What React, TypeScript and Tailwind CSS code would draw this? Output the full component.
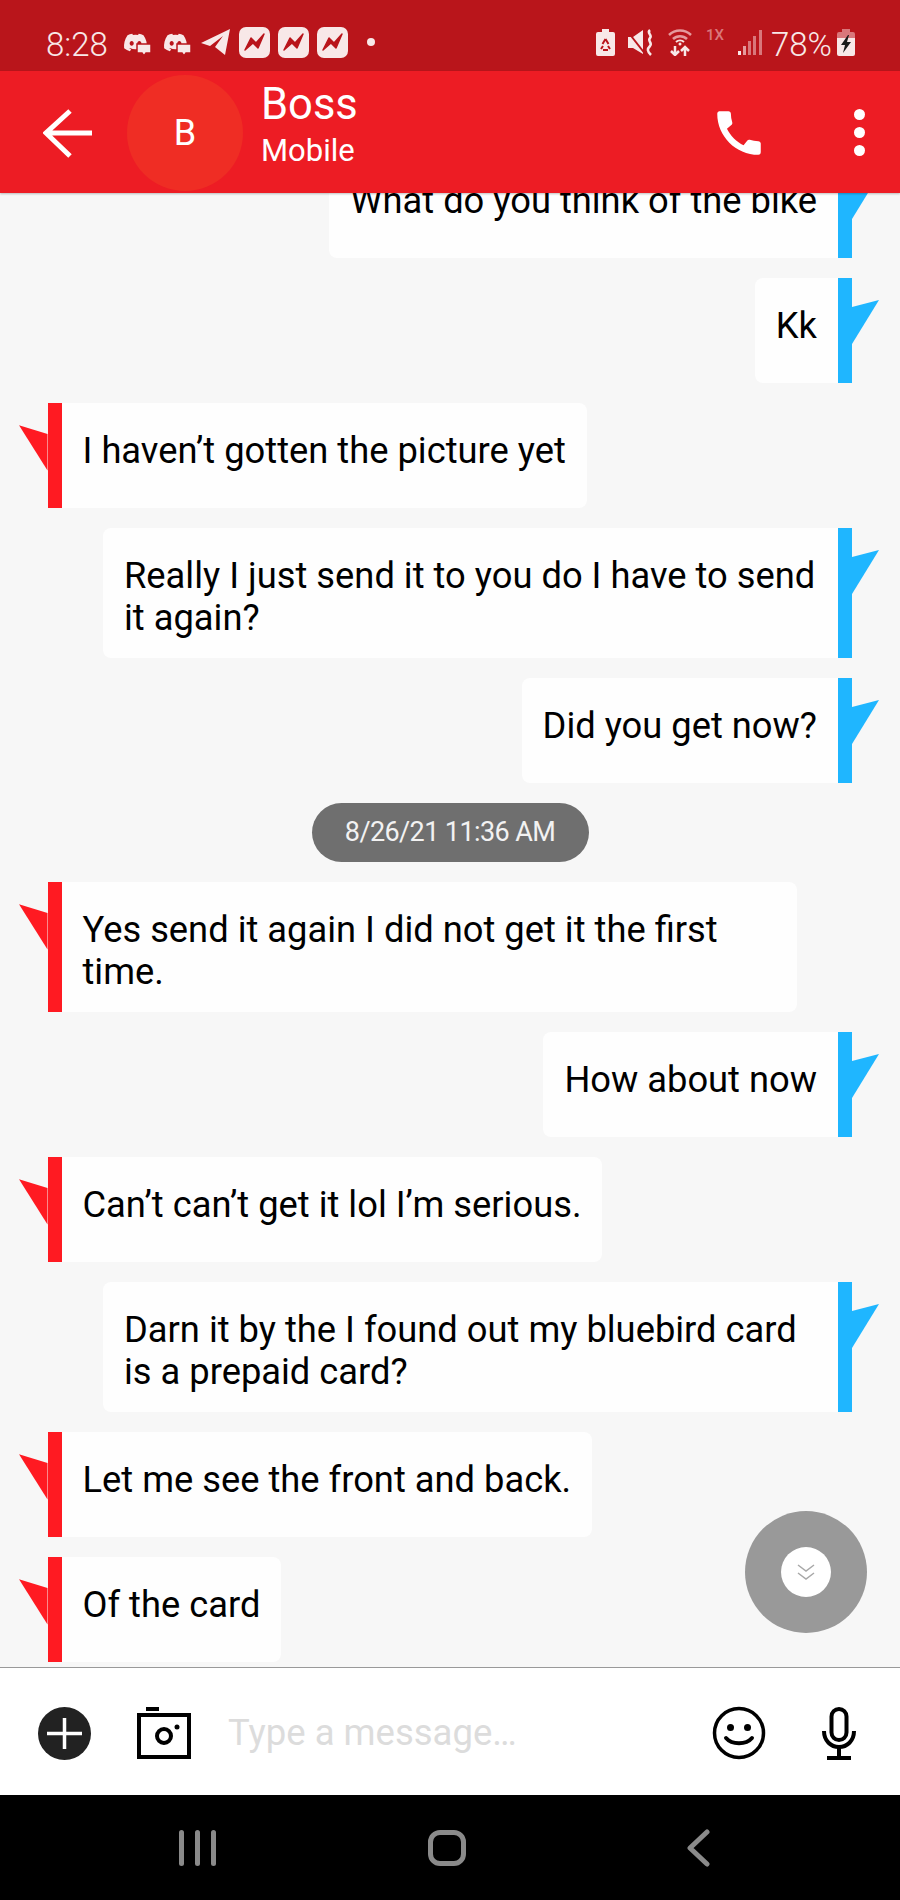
import React from 'react';
import { FaDiscord } from 'react-icons/fa';
import { MdCall } from 'react-icons/md';

type Message = { id: number; side: 'in' | 'out'; text: string };

const firstMessages: Message[] = [
  { id: 1, side: 'out', text: 'What do you think of the bike' },
  { id: 2, side: 'out', text: 'Kk' },
  { id: 3, side: 'in', text: 'I haven’t gotten the picture yet' },
  { id: 4, side: 'out', text: 'Really I just send it to you do I have to send it again?' },
  { id: 5, side: 'out', text: 'Did you get now?' },
];

const laterMessages: Message[] = [
  { id: 6, side: 'in', text: 'Yes send it again I did not get it the first time.' },
  { id: 7, side: 'out', text: 'How about now' },
  { id: 8, side: 'in', text: 'Can’t can’t get it lol I’m serious.' },
  { id: 9, side: 'out', text: 'Darn it by the I found out my bluebird card is a prepaid card?' },
  { id: 10, side: 'in', text: 'Let me see the front and back.' },
  { id: 11, side: 'in', text: 'Of the card' },
];

const MessengerBadge = () => (
  <div className="w-[31px] h-[31px] rounded-[7px] bg-[#f8e8e8] flex items-center justify-center">
    <svg width="23" height="19" viewBox="0 0 23 19">
      <path d="M2 17L8 5L13 10L21 1L15 15L10 10Z" fill="#b9151b" stroke="#b9151b" strokeWidth="1.5" strokeLinejoin="round" />
    </svg>
  </div>
);

const DiscordBadge = () => (
  <div className="relative w-[27px] h-[22px]">
    <FaDiscord className="w-[25px] h-[23px] text-[#f8e8e8]" />
    <svg className="absolute right-[-2px] bottom-[-4px]" width="16" height="14" viewBox="0 0 16 14">
      <path d="M1 1h14v9H10l-2 3-2-3H1z" fill="#f8e8e8" stroke="#b9151b" strokeWidth="1.5" />
    </svg>
  </div>
);

const StatusBar = () => (
  <div className="h-[71px] shrink-0 bg-[#b9151b] flex items-center pl-[46px] pr-[45px] pt-[13px] text-[#f8e8e8]">
    <span className="text-[33px] leading-none font-light w-[77px] relative top-[2px]">8:28</span>
    <DiscordBadge />
    <div className="ml-[13px]">
      <DiscordBadge />
    </div>
    <svg className="ml-[11px]" width="30" height="28" viewBox="0 0 30 28">
      <path d="M0 15L29 1L24 27L14 19L22 8L9 18Z" fill="#f8e8e8" />
    </svg>
    <div className="ml-[8px] flex gap-[8px]">
      <MessengerBadge />
      <MessengerBadge />
      <MessengerBadge />
    </div>
    <div className="ml-[19px] w-[8px] h-[8px] rounded-full bg-[#f8e8e8]" />
    <div className="ml-auto flex items-center">
      <svg width="19" height="27" viewBox="0 0 19 27">
        <path d="M6 0h7v3h4a2 2 0 0 1 2 2v20a2 2 0 0 1-2 2H2a2 2 0 0 1-2-2V5a2 2 0 0 1 2-2h4z" fill="#f8e8e8" />
        <path d="M9.5 10l-3 5M9.5 10l3 5M5 20l2-3M14 20l-2-3M7 21h5" stroke="#b9151b" strokeWidth="2" fill="none" />
      </svg>
      <svg className="ml-[13px]" width="27" height="27" viewBox="0 0 27 27">
        <path d="M0 8h5l10-7v24L5 19H0z" fill="#f8e8e8" />
        <path d="M0 3l18 23" stroke="#b9151b" strokeWidth="2" />
        <path d="M22 1c-4 3 3 5 0 8s3 5 0 8-3 5 1 9" stroke="#f8e8e8" strokeWidth="2.5" fill="none" />
      </svg>
      <svg className="ml-[13px]" width="24" height="28" viewBox="0 0 24 28">
        <path d="M1 7a16 16 0 0 1 22 0M5 11a10 10 0 0 1 14 0" stroke="#e59a9d" strokeWidth="2.5" fill="none" />
        <path d="M8 14a6 6 0 0 1 8 0" stroke="#f8e8e8" strokeWidth="2" fill="none" />
        <circle cx="12" cy="16" r="1.5" fill="#f8e8e8" />
        <path d="M7 18v9M3 23l4 4 4-4M17 28v-9M13 23l4-4 4 4" stroke="#f8e8e8" strokeWidth="2.5" fill="none" />
      </svg>
      <span className="ml-[14px] mb-[14px] text-[15px] leading-none text-[#d9777b] font-medium w-[18px]">1X</span>
      <svg className="ml-[14px]" width="24" height="25" viewBox="0 0 24 25">
        <rect x="0" y="21" width="3" height="4" fill="#f8e8e8" />
        <rect x="5" y="16" width="3" height="9" fill="#e59a9d" />
        <rect x="10" y="11" width="3" height="14" fill="#d9777b" />
        <rect x="15" y="6" width="3" height="19" fill="#d9777b" />
        <rect x="21" y="0" width="3" height="25" fill="#d9777b" />
      </svg>
      <span className="ml-[9px] text-[33px] leading-none font-light relative top-[2px]">78%</span>
      <svg className="ml-[5px]" width="18" height="27" viewBox="0 0 18 27">
        <path d="M5 0h8v3h3a2 2 0 0 1 2 2v4H0V5a2 2 0 0 1 2-2h3z" fill="#d9777b" />
        <path d="M0 9h18v16a2 2 0 0 1-2 2H2a2 2 0 0 1-2-2z" fill="#f8e8e8" />
        <path d="M11 6L4 16h4l-2 8 8-11h-4l2-7z" fill="#1a1a1a" />
      </svg>
    </div>
  </div>
);

const Header = () => (
  <div className="h-[122px] shrink-0 bg-[#ed1c24] flex items-center pl-[43px] pr-[35px] text-white shadow-[0_1px_2px_rgba(0,0,0,0.25)] z-10">
    <svg width="50" height="50" viewBox="0 0 50 50" className="shrink-0 mt-[3px]">
      <path d="M49 24H4M27 2L3 24l24 23" stroke="#fff" strokeWidth="5" fill="none" />
    </svg>
    <div className="ml-[34px] w-[116px] h-[116px] rounded-full bg-[#ef2d24] flex items-center justify-center text-[36px] leading-none shrink-0 mt-[2px]">
      B
    </div>
    <div className="ml-[18px] flex flex-col mt-[-13px]">
      <span className="text-[43.5px] leading-[50px]">Boss</span>
      <span className="text-[31px] leading-[42px]">Mobile</span>
    </div>
    <MdCall className="ml-auto w-[58px] h-[58px] mt-[2px]" />
    <div className="ml-[86px] flex flex-col gap-[7px]">
      <div className="w-[11px] h-[11px] rounded-full bg-white" />
      <div className="w-[11px] h-[11px] rounded-full bg-white" />
      <div className="w-[11px] h-[11px] rounded-full bg-white" />
    </div>
  </div>
);

const MessageRow = ({ message, first }: { message: Message; first?: boolean }) => {
  if (message.side === 'in') {
    return (
      <div className={`flex justify-start pl-[19px] shrink-0 ${first ? 'mt-[-40px]' : ''}`}>
        <svg width="28.5" height="70" viewBox="0 0 29 70" className="shrink-0 self-start">
          <path d="M0 22L29 31V68Z" fill="#ff1a22" />
        </svg>
        <div className="w-[14px] bg-[#ff1a22] shrink-0" />
        <div className="max-w-[735px] min-h-[105px] bg-[#fefefe] rounded-r-[8px] px-[21px] pt-[26.5px] pb-[19.5px] text-[36.3px] leading-[42px] text-black">
          {message.text}
        </div>
      </div>
    );
  }
  return (
    <div className={`flex justify-end pr-[21px] shrink-0 ${first ? 'mt-[-40px]' : ''}`}>
      <div className="max-w-[735px] min-h-[105px] bg-[#fefefe] rounded-l-[8px] px-[21px] pt-[26.5px] pb-[19.5px] text-[36.3px] leading-[42px] text-black">
        {message.text}
      </div>
      <div className="w-[14px] bg-[#1fb6ff] shrink-0" />
      <svg width="27" height="70" viewBox="0 0 27 70" className="shrink-0 self-start">
        <path d="M27 22L0 29V66Z" fill="#1fb6ff" />
      </svg>
    </div>
  );
};

const Composer = () => (
  <div className="h-[128px] shrink-0 bg-white border-t border-[#999999] flex items-center pl-[38px] pr-[44px] pt-[3px]">
    <svg width="53" height="53" viewBox="0 0 53 53" className="shrink-0">
      <circle cx="26.5" cy="26.5" r="26.5" fill="#222222" />
      <path d="M26.5 11v31M9 26.5h35" stroke="#fff" strokeWidth="3.5" />
    </svg>
    <svg width="54" height="52" viewBox="0 0 54 52" className="shrink-0 ml-[46px]">
      <path d="M9 0h13v4H9z" fill="#000" />
      <rect x="2" y="8" width="50" height="42" fill="none" stroke="#000" strokeWidth="4" />
      <circle cx="27" cy="29" r="7" fill="none" stroke="#000" strokeWidth="4" />
      <circle cx="40" cy="20" r="2.5" fill="#000" />
    </svg>
    <span className="ml-[37px] text-[36.5px] leading-none text-[#dcdcdc]">Type a message…</span>
    <svg width="54" height="54" viewBox="0 0 54 54" className="shrink-0 ml-auto">
      <circle cx="27" cy="27" r="24.5" fill="none" stroke="#000" strokeWidth="3.5" />
      <circle cx="18.5" cy="21.5" r="3.5" fill="#000" />
      <circle cx="35.5" cy="21.5" r="3.5" fill="#000" />
      <path d="M14 32c6 7 20 7 26 0" fill="none" stroke="#000" strokeWidth="4" strokeLinecap="round" />
    </svg>
    <svg width="34" height="53" viewBox="0 0 34 53" className="shrink-0 ml-[56px]">
      <rect x="9.5" y="2" width="15" height="31" rx="7.5" fill="none" stroke="#000" strokeWidth="4" />
      <path d="M2 24c0 10 7 16 15 16s15-6 15-16" fill="none" stroke="#000" strokeWidth="4" />
      <path d="M17 40v9" stroke="#000" strokeWidth="4" />
      <path d="M5 49h24v4H5z" fill="#000" />
    </svg>
  </div>
);

const NavBar = () => (
  <div className="h-[105px] shrink-0 bg-black flex items-center pl-[179px]">
    <div className="flex gap-[11px] shrink-0">
      <div className="w-[5px] h-[36px] rounded-full bg-[#8a8a8a]" />
      <div className="w-[5px] h-[36px] rounded-full bg-[#8a8a8a]" />
      <div className="w-[5px] h-[36px] rounded-full bg-[#8a8a8a]" />
    </div>
    <div className="ml-[212px] w-[38px] h-[36px] rounded-[12px] border-[5px] border-[#8a8a8a] shrink-0" />
    <svg width="24" height="38" viewBox="0 0 24 38" className="ml-[220px] shrink-0">
      <path d="M21 3L4 19l17 16" fill="none" stroke="#8a8a8a" strokeWidth="5" strokeLinecap="round" strokeLinejoin="round" />
    </svg>
  </div>
);

export default function App() {
  return (
    <div className="w-[900px] h-[1900px] flex flex-col overflow-hidden bg-[#f7f7f7] font-['Roboto',sans-serif]">
      <StatusBar />
      <Header />
      <div className="relative flex-1 min-h-0 overflow-hidden">
        <div className="flex flex-col gap-[20px]">
          {firstMessages.map((message, index) => (
            <MessageRow key={message.id} message={message} first={index === 0} />
          ))}
          <div className="flex justify-center shrink-0">
            <div className="w-[277px] h-[59px] rounded-full bg-[#6f6f6f] text-[#f2f2f2] text-[27px] leading-none tracking-[-0.6px] flex items-center justify-center">
              8/26/21 11:36 AM
            </div>
          </div>
          {laterMessages.map((message) => (
            <MessageRow key={message.id} message={message} />
          ))}
        </div>
        <div className="absolute left-[745px] top-[1318px] w-[122px] h-[122px] rounded-full bg-[#999999] flex items-center justify-center">
          <div className="w-[50px] h-[50px] rounded-full bg-white flex items-center justify-center">
            <svg width="18" height="18" viewBox="0 0 18 18">
              <path d="M1 2l8 6 8-6M1 10l8 6 8-6" fill="none" stroke="#a8a8a8" strokeWidth="1.5" />
            </svg>
          </div>
        </div>
      </div>
      <Composer />
      <NavBar />
    </div>
  );
}
